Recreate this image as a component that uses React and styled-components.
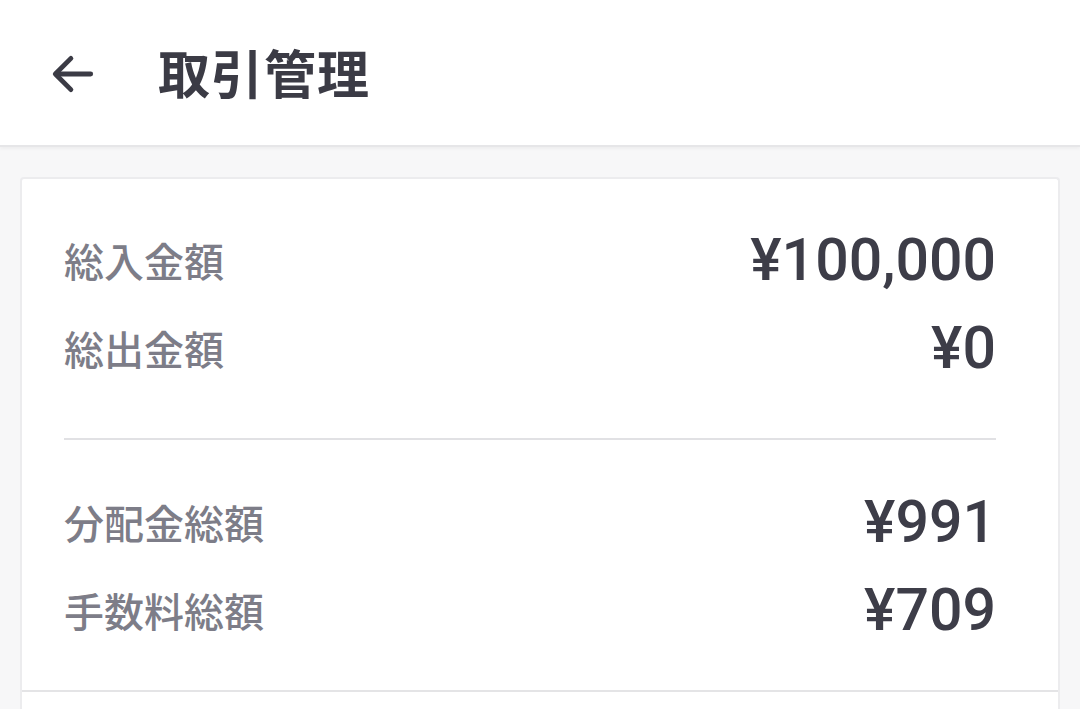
import React from 'react'
import styled, { createGlobalStyle } from 'styled-components'

const GlobalStyle = createGlobalStyle`
  html, body {
    margin: 0;
    padding: 0;
    background: #f7f7f8;
    font-family: Roboto, "Noto Sans CJK JP", sans-serif;
    overflow: hidden;
  }
`

const incoming = [
  { label: '総入金額', value: '¥100,000' },
  { label: '総出金額', value: '¥0' },
]

const totals = [
  { label: '分配金総額', value: '¥991' },
  { label: '手数料総額', value: '¥709' },
]

const Page = styled.div`
  min-height: 709px;
  display: flex;
  flex-direction: column;
`

const Header = styled.header`
  height: 147px;
  background: #ffffff;
  border-bottom: 2px solid #e6e6e8;
  box-shadow: 0 2px 3px rgba(0, 0, 0, 0.04);
  display: flex;
  align-items: center;
  padding: 0 0 0 48px;
  box-sizing: border-box;
  gap: 60px;
`

const BackButton = styled.button`
  border: none;
  background: none;
  padding: 0;
  width: 50px;
  height: 50px;
  display: flex;
  align-items: center;
  justify-content: center;
  color: #3b3b45;
  margin-top: 2px;
`

const Title = styled.h1`
  margin: 0 0 2px;
  font-family: "Noto Sans CJK JP", sans-serif;
  font-size: 52px;
  font-weight: 700;
  color: #3b3b45;
  letter-spacing: 1px;
`

const Card = styled.div`
  margin: 30px 20px 0;
  background: #ffffff;
  border: 2px solid #ececee;
  border-bottom: none;
  border-radius: 4px 4px 0 0;
  flex: 1;
`

const Section = styled.div`
  padding: ${p => p.$pad};
  border-bottom: ${p => (p.$last ? '2px solid #e4e4e6' : 'none')};
`

const Row = styled.div`
  height: 88px;
  display: flex;
  align-items: center;
  justify-content: space-between;
`

const Label = styled.span`
  font-family: "Noto Sans CJK JP", sans-serif;
  font-size: 40px;
  font-weight: 500;
  color: #7d7d88;
`

const Value = styled.span`
  font-family: Roboto, sans-serif;
  font-size: 59px;
  font-weight: 500;
  color: #3d3d48;
  margin-top: -2px;
`

const Divider = styled.div`
  height: 2px;
  background: #e1e1e4;
  margin: 0 62px 0 42px;
`

const ArrowIcon = () => (
  <svg width="50" height="50" viewBox="0 0 24 24" fill="none" stroke="currentColor"
    strokeWidth="2.3" strokeLinecap="round" strokeLinejoin="round">
    <path d="M20.5 12H3.8" />
    <path d="M11 4.5L3.5 12l7.5 7.5" />
  </svg>
)

export default function App() {
  return (
    <Page>
      <GlobalStyle />
      <Header>
        <BackButton aria-label="back">
          <ArrowIcon />
        </BackButton>
        <Title>取引管理</Title>
      </Header>
      <Card>
        <Section $pad="37px 62px 46px 42px">
          {incoming.map(item => (
            <Row key={item.label}>
              <Label>{item.label}</Label>
              <Value>{item.value}</Value>
            </Row>
          ))}
        </Section>
        <Divider />
        <Section $pad="38px 62px 36px 42px" $last>
          {totals.map(item => (
            <Row key={item.label}>
              <Label>{item.label}</Label>
              <Value>{item.value}</Value>
            </Row>
          ))}
        </Section>
      </Card>
    </Page>
  )
}
